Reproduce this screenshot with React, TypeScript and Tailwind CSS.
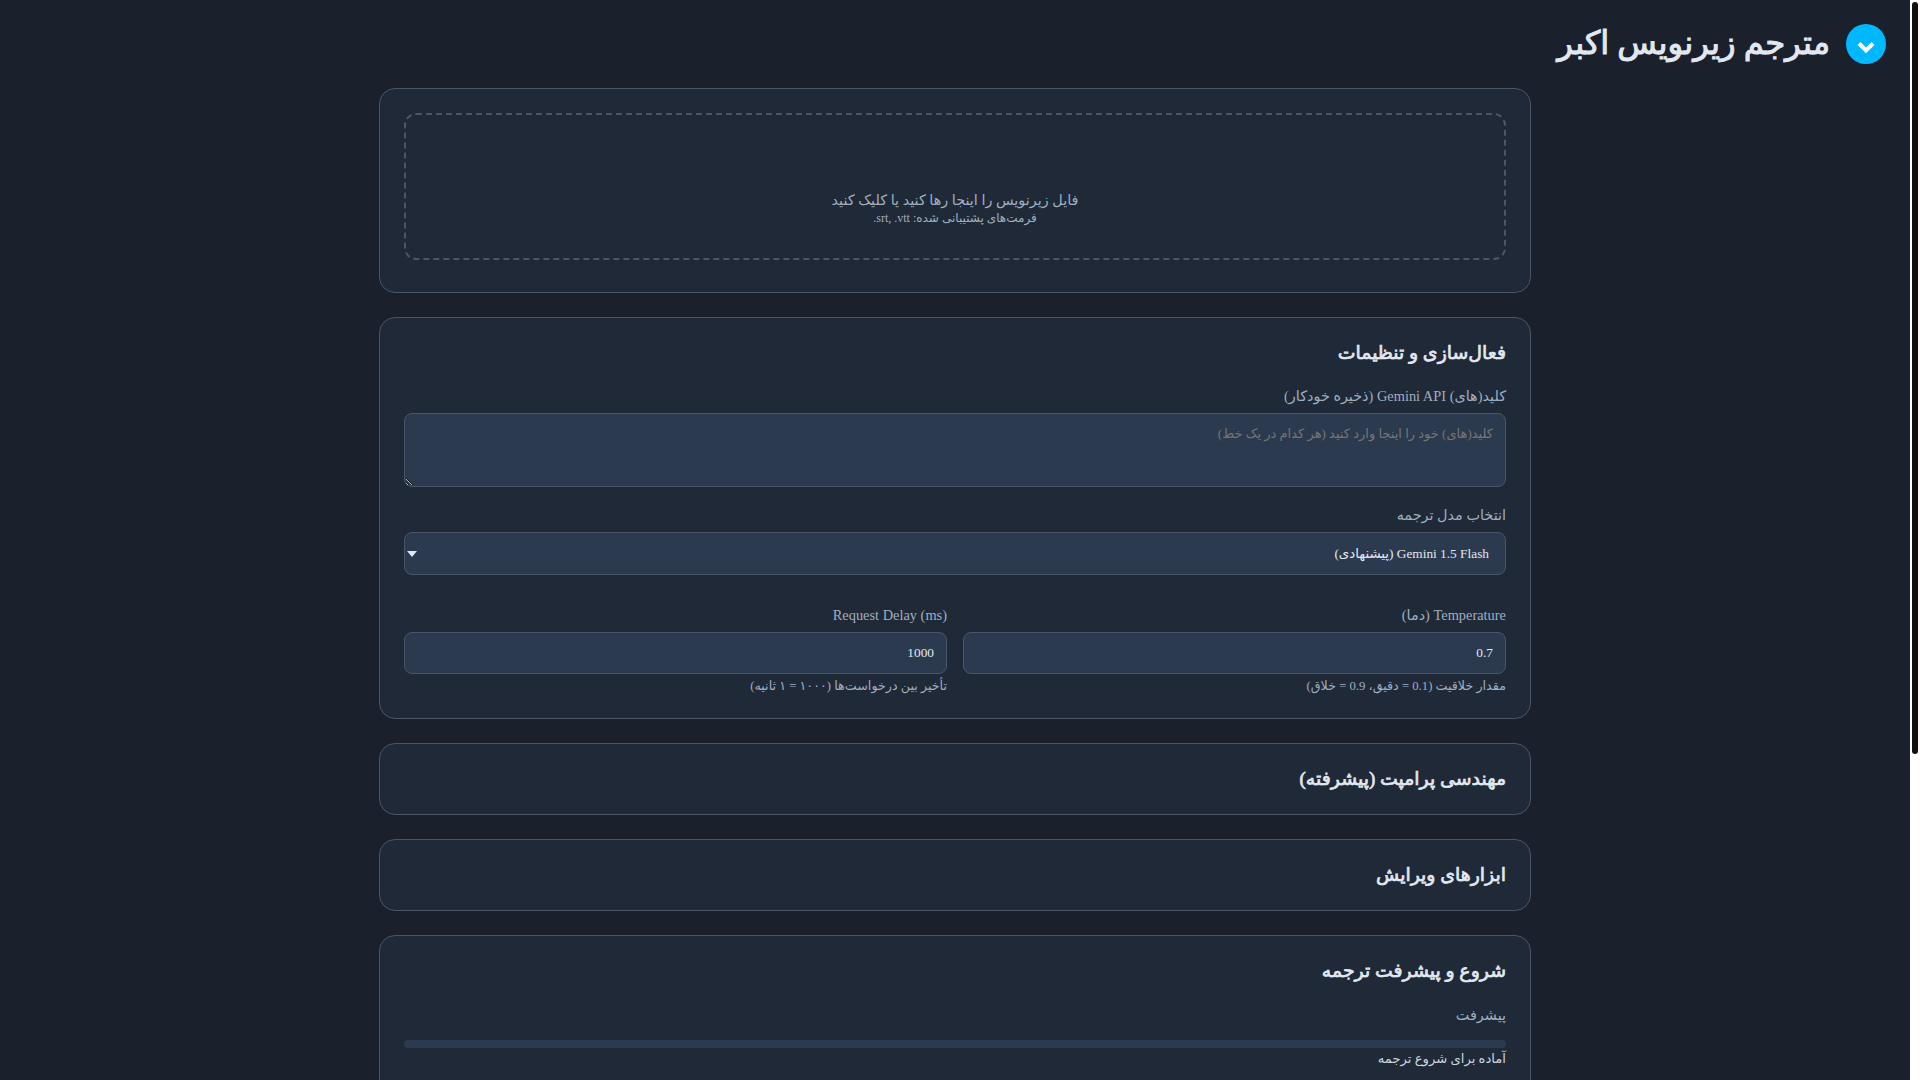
import React from "react";

function Card({ children }: { children?: React.ReactNode }) {
  return <section className="mb-6 rounded-2xl border border-[#4a5568] bg-[#1f2937] p-6">{children}</section>;
}

function H({ children }: { children: React.ReactNode }) {
  return <h3 className="pt-[1px] text-[18.9px] leading-[20.8px] font-normal text-[#e2e8f0] [-webkit-text-stroke-width:0.7px]">{children}</h3>;
}

const label = "block text-[14.4px] leading-[20px] text-[#a0aec0]";
const field = "block w-full rounded-lg border border-[#4a5568] bg-[#2c3a4f] text-[13.33px] text-[#e2e8f0] outline-none";
const help = "mt-1 text-[12.7px] leading-[16px] text-[#a0aec0]";

export default function App() {
  return (
    <div className="flex h-screen overflow-hidden bg-[#1a202c]">
      <div dir="rtl" className="min-w-0 flex-1 overflow-hidden font-['Liberation_Serif','DejaVu_Sans',serif] text-[#e2e8f0]">
        <header className="flex h-[88px] items-center gap-4 px-6">
          <svg viewBox="0 0 40 40" className="h-10 w-10 shrink-0">
            <circle cx="20" cy="20" r="20" fill="#00b8ff" />
            <path d="M13 19.5l7 7 7-7" fill="none" stroke="white" strokeWidth="4" />
          </svg>
          <h1 className="pb-[2px] text-[32.3px] leading-10 font-normal text-[#e2e8f0] [-webkit-text-stroke-width:1px]">مترجم زیرنویس اکبر</h1>
        </header>

        <main className="mx-auto w-[1152px]">
          <Card>
            <div className="mb-2 flex h-[147px] flex-col items-center justify-end rounded-xl border-2 border-dashed border-[#4a5568] pb-[32px] text-center">
              <p className="text-[14.4px] leading-[20px] text-[#a0aec0]">فایل زیرنویس را اینجا رها کنید یا کلیک کنید</p>
              <p className="text-[12px] leading-[16px] text-[#a0aec0]">فرمت‌های پشتیبانی شده: srt, .vtt.</p>
            </div>
          </Card>

          <Card>
            <H>فعال‌سازی و تنظیمات</H>
            <label className={`mt-[22px] ${label}`}>کلید(های) Gemini API (ذخیره خودکار)</label>
            <textarea
              className={`mt-[7px] h-[74px] p-3 text-[13px] leading-[16px] placeholder:text-[#757575] ${field}`}
              placeholder="کلید(های) خود را اینجا وارد کنید (هر کدام در یک خط)"
            />
            <label className={`mt-[18px] ${label}`}>انتخاب مدل ترجمه</label>
            <div className="relative mt-[7px]">
              <select className={`h-[43px] appearance-none pt-[2px] pr-4 pl-3 ${field}`}>
                <option>Gemini 1.5 Flash (پیشنهادی)</option>
              </select>
              <svg viewBox="0 0 10 6" className="pointer-events-none absolute top-[19px] left-[3px] h-[6px] w-[10px]">
                <path d="M0 0h10L5 6z" fill="#e2e8f0" />
              </svg>
            </div>
            <div className="mt-[30.4px] grid grid-cols-2 gap-4">
              <div>
                <label className={label}>Temperature (دما)</label>
                <input readOnly value="0.7" className={`mt-[7px] h-[42px] px-3 ${field}`} />
                <p className={help}>مقدار خلاقیت (0.1 = دقیق، 0.9 = خلاق)</p>
              </div>
              <div>
                <label className={label}>Request Delay (ms)</label>
                <input readOnly value="1000" className={`mt-[7px] h-[42px] px-3 ${field}`} />
                <p className={help}>تأخیر بین درخواست‌ها (۱۰۰۰ = ۱ ثانیه)</p>
              </div>
            </div>
          </Card>

          <Card><H>مهندسی پرامپت (پیشرفته)</H></Card>
          <Card><H>ابزارهای ویرایش</H></Card>

          <Card>
            <H>شروع و پیشرفت ترجمه</H>
            <label className={`mt-[23px] ${label}`}>پیشرفت</label>
            <div className="mt-[15.5px] h-2 rounded-full bg-[#2c3a4f]" />
            <p className="mt-[1px] text-[13.15px] leading-[20px] text-[#cbd5e0]">آماده برای شروع ترجمه</p>
            <div className="h-[100px]" />
          </Card>
        </main>
      </div>
      <div className="w-[10px] shrink-0 bg-white p-[2px]">
        <div className="h-[752px] w-[6px] rounded-[3px] bg-[#111]" />
      </div>
    </div>
  );
}
